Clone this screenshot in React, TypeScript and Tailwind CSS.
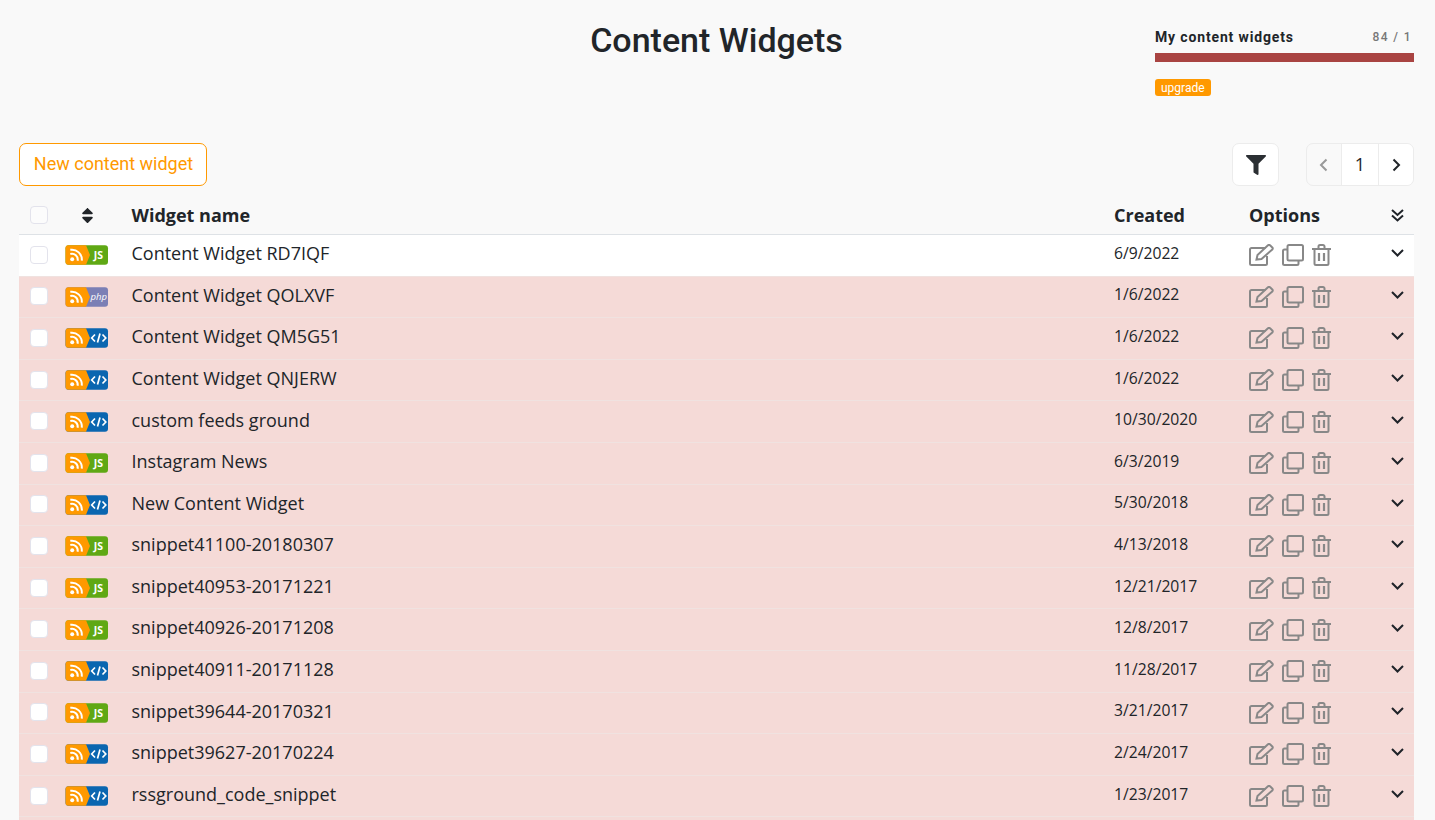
import { FaFilter, FaSort } from "react-icons/fa";

type Kind = "js" | "php" | "code";
const rows: [string, string, Kind][] = [
  ["Content Widget RD7IQF", "6/9/2022", "js"],
  ["Content Widget QOLXVF", "1/6/2022", "php"],
  ["Content Widget QM5G51", "1/6/2022", "code"],
  ["Content Widget QNJERW", "1/6/2022", "code"],
  ["custom feeds ground", "10/30/2020", "code"],
  ["Instagram News", "6/3/2019", "js"],
  ["New Content Widget", "5/30/2018", "code"],
  ["snippet41100-20180307", "4/13/2018", "js"],
  ["snippet40953-20171221", "12/21/2017", "js"],
  ["snippet40926-20171208", "12/8/2017", "js"],
  ["snippet40911-20171128", "11/28/2017", "code"],
  ["snippet39644-20170321", "3/21/2017", "js"],
  ["snippet39627-20170224", "2/24/2017", "code"],
  ["rssground_code_snippet", "1/23/2017", "code"],
];

function Badge({ kind }: { kind: Kind }) {
  const bg = kind === "js" ? "#5fa814" : kind === "php" ? "#7b7fb5" : "#0a66b0";
  return (
    <svg width="44" height="20" viewBox="0 0 44 20" className="block">
      <rect x="0.500" y="0.300" width="42.500" height="19.400" rx="3" fill={bg} />
      <path d="M3.500 0.300H21l4 9.700-4 9.700H3.500a3 3 0 0 1-3-3V3.300a3 3 0 0 1 3-3Z" fill="#ff9900" />
      <circle cx="7.200" cy="14.300" r="2" fill="#fff" />
      <path d="M5.300 9a5.800 5.800 0 0 1 7.300 6.700M5.300 4.800a10 10 0 0 1 11.500 10.800" fill="none" stroke="#fff" strokeWidth="2" />
      {kind === "js" && (
        <text x="33.500" y="14" textAnchor="middle" fontSize="10.500" fontWeight="700" fill="#fff" fontFamily="'Open Sans', sans-serif">JS</text>
      )}
      {kind === "php" && (
        <text x="33.800" y="13" textAnchor="middle" fontSize="9.500" fontStyle="italic" fill="#fff" fontFamily="'Open Sans', sans-serif">php</text>
      )}
      {kind === "code" && (
        <path d="M30 6.500l-3.300 3.500 3.300 3.500M37.500 6.500l3.300 3.500-3.300 3.500M35 5.500l-2.500 9" fill="none" stroke="#fff" strokeWidth="1.700" />
      )}
    </svg>
  );
}

function Actions() {
  return (
    <div className="flex items-center text-[#888888]">
      <svg width="25" height="22" viewBox="0 0 25 22" fill="none" stroke="currentColor" strokeWidth="2" className="mr-[8px]">
        <path d="M16.500 4H2.500A1.500 1.500 0 0 0 1 5.500v14A1.500 1.500 0 0 0 2.500 21h14a1.500 1.500 0 0 0 1.500-1.500V12" />
        <path d="M7.500 15.500l1-4.500L19 1.300a1.500 1.500 0 0 1 2 0l2.300 2.200a1.500 1.500 0 0 1 0 2L12.500 15Z" />
      </svg>
      <svg width="22" height="22" viewBox="0 0 22 22" fill="none" stroke="currentColor" strokeWidth="2" className="mr-[8px]">
        <rect x="5.500" y="1" width="15.500" height="15.500" rx="1.500" />
        <path d="M5 5.500H2.500A1.500 1.500 0 0 0 1 7v12.500A1.500 1.500 0 0 0 2.500 21H15a1.500 1.500 0 0 0 1.500-1.500V17" />
      </svg>
      <svg width="19" height="22" viewBox="0 0 19 22" fill="none" stroke="currentColor" strokeWidth="2">
        <path d="M0 5h19M6.500 5V2.500A1.500 1.500 0 0 1 8 1h3a1.500 1.500 0 0 1 1.500 1.500V5" />
        <path d="M2.500 5v14.500A1.500 1.500 0 0 0 4 21h11a1.500 1.500 0 0 0 1.500-1.500V5" />
        <path d="M7 9v8M12 9v8" strokeWidth="2.200" />
      </svg>
    </div>
  );
}

function Chevron() {
  return (
    <svg width="13" height="8" viewBox="0 0 13 8" fill="none" stroke="#1f2329" strokeWidth="2" className="block">
      <path d="M1 1l5.500 5.500L12 1" />
    </svg>
  );
}

function Check({ white }: { white?: boolean }) {
  return <div className={`mb-[1px] h-[18px] w-[18px] rounded-[4px] border border-[#e3e3ec] ${white ? "bg-white" : "bg-[#fcfcfc]"}`} />;
}

function Row({ name, date, kind, first }: { name: string; date: string; kind: Kind; first?: boolean }) {
  return (
    <div className={`flex h-[41.6px] items-center border-b border-[#f0e2e0] ${first ? "bg-white" : "bg-[#f5dad7]"}`}>
      <div className="flex w-[40px] justify-center"><Check white /></div>
      <div className="flex w-[72px] items-center justify-start pl-[6px]"><Badge kind={kind} /></div>
      <div className="flex-1 pb-[3.3px] pl-[0.5px] text-[18px] text-[#212529]">{name}</div>
      <div className="w-[135px] pb-[3.4px] text-[15.7px] text-[#212529]">{date}</div>
      <div className="w-[140px]"><Actions /></div>
      <div className="w-[25px] pb-[4px] pl-[2px]"><Chevron /></div>
    </div>
  );
}

export default function App() {
  return (
    <div className="h-screen overflow-hidden bg-[#f9f9f9] font-['Open_Sans',sans-serif] text-[#212529]">
      <div className="ml-[19px] mr-[21px]">
        <div className="relative flex h-[143px] justify-center">
          <h1 className="pt-[16px] font-['Roboto',sans-serif] text-[34px] font-medium leading-[48px]">Content Widgets</h1>
          <div className="absolute right-0 top-[28px] w-[259px] font-['Roboto',sans-serif]">
            <div className="flex items-center justify-between pr-[2px] text-[14px] font-bold leading-[18px] tracking-[0.85px]">
              <span>My content widgets</span>
              <span className="text-[12px] font-medium tracking-[1.4px] text-[#777]">84 / 1</span>
            </div>
            <div className="mt-[7px] h-[9px] bg-[#a94442]" />
            <span className="mt-[17px] inline-block rounded-[3px] bg-[#ff9900] px-[6px] pt-[1px] text-[12px] leading-[16px] text-white">upgrade</span>
          </div>
        </div>
        <div className="flex items-start justify-between">
          <button className="h-[43px] w-[188px] rounded-[7px] border border-[#ff9900] bg-white pb-[2px] pl-[1px] font-['Roboto',sans-serif] text-[18px] text-[#ff9900]">New content widget</button>
          <div className="flex gap-[27px]">
            <div className="flex h-[43px] w-[47px] items-center justify-center rounded-[7px] border border-[#ececec] bg-white text-[#2b2f33]"><FaFilter size={20} /></div>
            <div className="flex h-[43px] overflow-hidden rounded-[7px] border border-[#ececec]">
              <div className="flex w-[34px] items-center justify-center pr-[2px]">
                <svg width="9" height="14" viewBox="0 0 9 14" fill="none" stroke="#999999" strokeWidth="2"><path d="M7.500 1.500L2 7l5.500 5.500" /></svg>
              </div>
              <div className="flex w-[37px] items-center justify-center border-l border-[#ececec] bg-white text-[18px]">1</div>
              <div className="flex w-[35px] items-center justify-center border-l border-[#ececec] bg-white">
                <svg width="9" height="14" viewBox="0 0 9 14" fill="none" stroke="#212529" strokeWidth="2"><path d="M1.500 1.500L7 7l-5.500 5.500" /></svg>
              </div>
            </div>
          </div>
        </div>
        <div className="flex h-[49px] items-center border-b border-[#dee2e6] pt-[11px] text-[18px] font-bold">
          <div className="flex w-[40px] justify-center"><Check /></div>
          <div className="w-[72px] pl-[19px]"><FaSort size={19} /></div>
          <div className="flex-1 pl-[0.5px]">Widget name</div>
          <div className="w-[135px]">Created</div>
          <div className="w-[140px]">Options</div>
          <div className="w-[25px] pl-[2px]">
            <svg width="13" height="13" viewBox="0 0 13 13" fill="none" stroke="#1f2329" strokeWidth="2" className="block">
              <path d="M1 1l5.500 5 5.500-5M1 6.500l5.500 5 5.500-5" />
            </svg>
          </div>
        </div>
        {rows.map((r, i) => (
          <Row key={r[0]} name={r[0]} date={r[1]} kind={r[2]} first={i === 0} />
        ))}
        <div className="h-[40px] bg-[#f5dad7]" />
      </div>
    </div>
  );
}
